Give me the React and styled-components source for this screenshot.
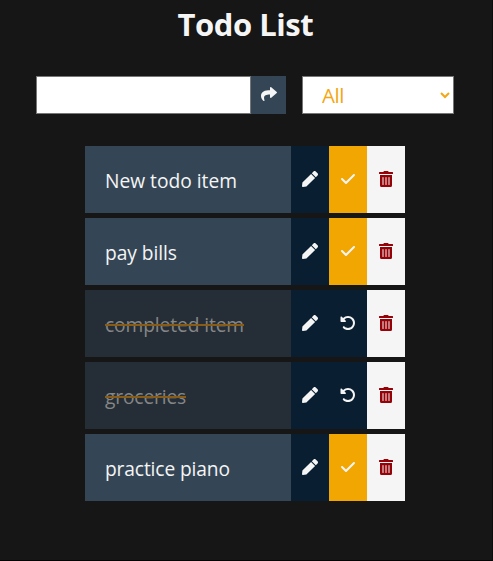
import React from "react";
import styled, { createGlobalStyle } from "styled-components";
import { FaPen, FaShare, FaTrashAlt } from "react-icons/fa";
import { FaCheck, FaRotateLeft } from "react-icons/fa6";

const GlobalStyle = createGlobalStyle`
  * { box-sizing: border-box; }
  body {
    margin: 0;
    background: #161616;
    color: #f5f5f5;
    font-family: "Segoe UI", "Open Sans", "Noto Sans", sans-serif;
  }
`;

const Page = styled.main`
  height: 561px;
  border-right: 1px solid #0c0c0c;
  border-bottom: 1px solid #040404;
  overflow: hidden;
`;

const Title = styled.h1`
  margin: 3px 0 0 177.5px;
  height: 43px;
  font-size: 31px;
  line-height: 43px;
  font-weight: 700;
  letter-spacing: -0.45px;
  white-space: nowrap;
`;

const Controls = styled.form`
  display: flex;
  margin: 30px 0 0 36px;
  height: 38px;
`;

const TextInput = styled.input`
  width: 215px;
  height: 38px;
  padding: 8px;
  border: 1px solid #767676;
  border-radius: 0;
  background: #fff;
  font: inherit;
  font-size: 20px;
  outline: none;
`;

const AddButton = styled.button`
  display: flex;
  align-items: center;
  justify-content: center;
  width: 35px;
  padding: 0 0 2px;
  border: 0;
  background: #344655;
  color: #f5f5f5;
  font-size: 16px;
`;

const Filter = styled.select`
  width: 152px;
  height: 38px;
  margin-left: 16px;
  padding: 0 0 0 15px;
  border: 1px solid #767676;
  border-radius: 0;
  background: #fff;
  color: #f3a712;
  font-family: inherit;
  font-size: 20.5px;
  letter-spacing: -0.5px;
`;

const List = styled.ul`
  display: flex;
  flex-direction: column;
  gap: 5px;
  width: 320px;
  margin: 32px 0 0 85px;
  padding: 0;
  list-style: none;
`;

const Item = styled.li`
  display: flex;
  height: 67px;
`;

const Label = styled.div`
  width: 206px;
  padding: 2px 0 0 20px;
  line-height: 66px;
  font-size: 19.2px;
  letter-spacing: ${(p) => p.$spacing}px;
  white-space: nowrap;
  background: ${(p) => (p.$done ? "#252e36" : "#344655")};
  color: ${(p) => (p.$done ? "#858686" : "#f5f5f5")};
  text-decoration: ${(p) => (p.$done ? "line-through 2px #895c16" : "none")};
`;

const tones = {
  navy: ["#091f31", "#f5f5f5"],
  amber: ["#f2a602", "#f5f5f5"],
  light: ["#f5f5f5", "#950207"],
};

const Action = styled.button`
  display: flex;
  align-items: center;
  justify-content: center;
  width: 38px;
  padding: 0 0 1px;
  border: 0;
  font-size: 16px;
  background: ${(p) => tones[p.$tone][0]};
  color: ${(p) => tones[p.$tone][1]};
`;

const todos = [
  { text: "New todo item", spacing: 0 },
  { text: "pay bills", spacing: -0.05 },
  { text: "completed item", done: true, spacing: -0.1 },
  { text: "groceries", done: true, spacing: -0.15 },
  { text: "practice piano", spacing: -0.13 },
];

export default function App() {
  return (
    <Page>
      <GlobalStyle />
      <Title>Todo List</Title>
      <Controls onSubmit={(e) => e.preventDefault()}>
        <TextInput type="text" aria-label="New todo" />
        <AddButton type="submit" aria-label="Add"><FaShare /></AddButton>
        <Filter aria-label="Filter">
          <option>All</option>
        </Filter>
      </Controls>
      <List>
        {todos.map((t) => (
          <Item key={t.text}>
            <Label $done={t.done} $spacing={t.spacing}>{t.text}</Label>
            <Action $tone="navy" aria-label="Edit"><FaPen /></Action>
            <Action $tone={t.done ? "navy" : "amber"} aria-label={t.done ? "Undo" : "Complete"}>
              {t.done ? <FaRotateLeft /> : <FaCheck />}
            </Action>
            <Action $tone="light" aria-label="Delete"><FaTrashAlt /></Action>
          </Item>
        ))}
      </List>
    </Page>
  );
}
